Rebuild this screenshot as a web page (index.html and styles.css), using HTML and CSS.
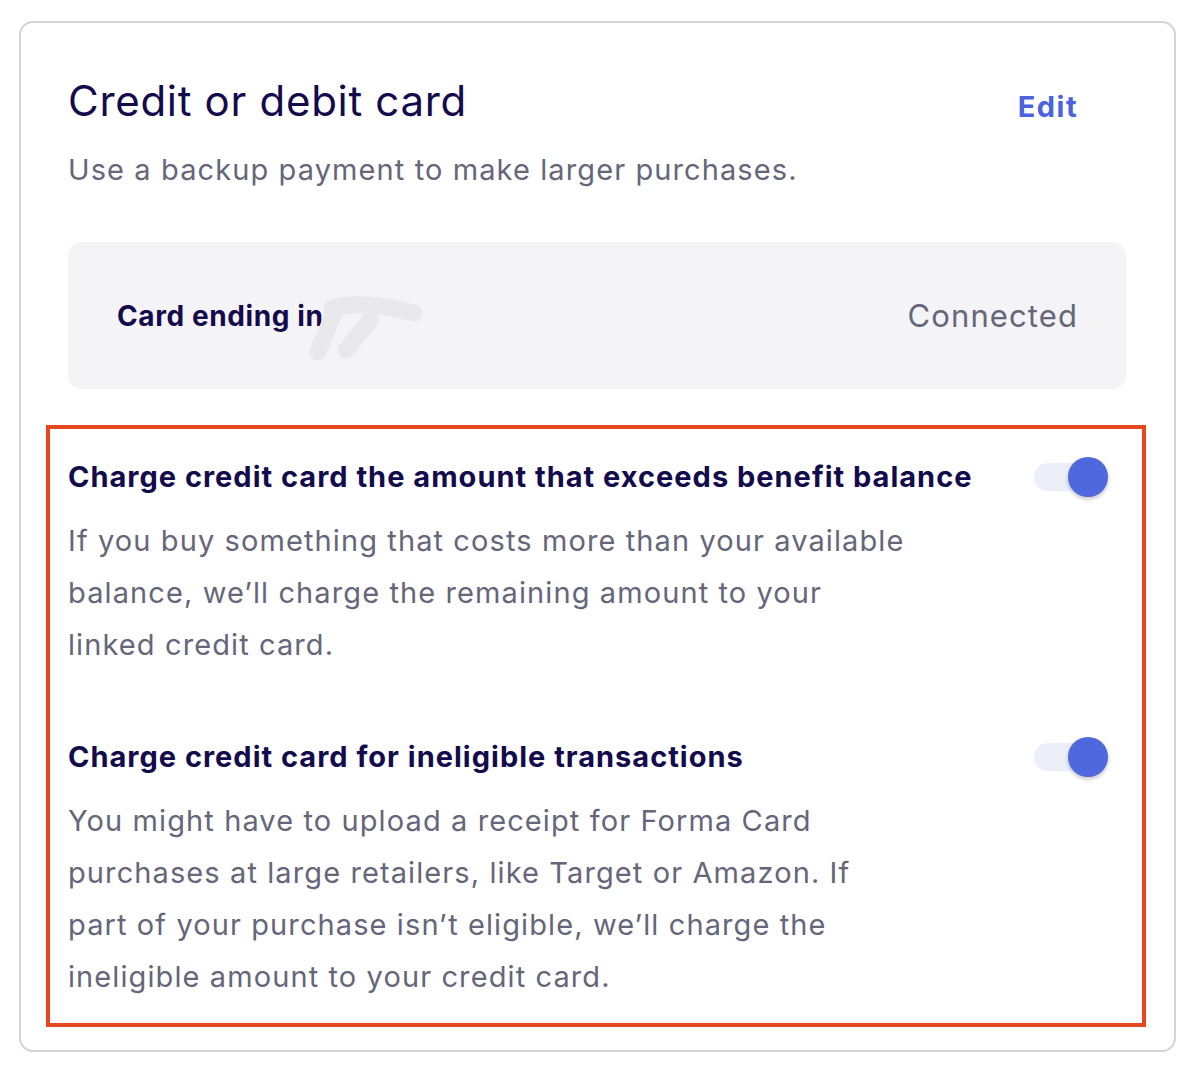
FILE: index.html
```html
<!DOCTYPE html>
<html>
	<head>
		<meta charset="UTF-8">
		<title>Credit or debit card</title>
		<link rel="stylesheet" href="styles.css">
	</head>

	<body>

		<div class="card">

			<div class="card-head">
				<h1 class="card-title">Credit or debit card</h1>
				<a class="card-edit" href="#">Edit</a>
			</div>
			<p class="card-sub">Use a backup payment to make larger purchases.</p>

			<div class="linked">
				<div class="linked-name">
					Card ending in
					<svg class="smudge" width="120" height="70" viewBox="0 0 120 70">
						<path d="M24 12 C48 6 72 9 106 17" />
						<path d="M28 12 L10 56" />
						<path d="M62 24 L38 54" />
					</svg>
				</div>
				<div class="linked-status">Connected</div>
			</div>

			<div class="options">

				<div class="option">
					<div class="option-row">
						<h2 class="option-title">Charge credit card the amount that exceeds benefit balance</h2>
						<span class="toggle"><span class="toggle-knob"></span></span>
					</div>
					<p class="option-text">If you buy something that costs more than your available balance, we’ll charge the remaining amount to your linked credit card.</p>
				</div>

				<div class="option">
					<div class="option-row">
						<h2 class="option-title">Charge credit card for ineligible transactions</h2>
						<span class="toggle"><span class="toggle-knob"></span></span>
					</div>
					<p class="option-text">You might have to upload a receipt for Forma Card purchases at large retailers, like Target or Amazon. If part of your purchase isn’t eligible, we’ll charge the ineligible amount to your credit card.</p>
				</div>

			</div>

		</div>

	</body>

</html>
```

FILE: styles.css
```css
* { margin: 0; padding: 0; box-sizing: border-box }

body {
	background: #fff;
	font-family: Inter, "Noto Sans", sans-serif;
	padding: 21px 28px 0 19px;
}

.card {
	width: 1157px;
	height: 1031px;
	border: 2px solid #d3d3d8;
	border-radius: 14px;
	padding: 54px 48px 0 47px;
}

.card-head {
	display: flex;
	justify-content: space-between;
	align-items: center;
	padding-right: 48px;
}

.card-title {
	font-size: 42px;
	font-weight: 400;
	color: #140b4c;
	letter-spacing: 0.7px;
	line-height: 48px;
}

.card-edit {
	font-size: 29px;
	font-weight: 700;
	color: #4c63dc;
	letter-spacing: 1.5px;
	text-decoration: none;
	margin-top: 10px;
}

.card-sub {
	margin-top: 25px;
	font-size: 29px;
	color: #66667a;
	letter-spacing: 1.1px;
	line-height: 40px;
}

.linked {
	margin-top: 52px;
	height: 147px;
	background: #f4f4f6;
	border-radius: 14px;
	display: flex;
	justify-content: space-between;
	align-items: center;
	padding: 0 48px 0 49px;
}

.linked-name {
	position: relative;
	font-size: 28px;
	font-weight: 700;
	color: #140b4c;
	letter-spacing: 0.6px;
}

.smudge {
	position: absolute;
	left: 191px;
	top: -3px;
	fill: none;
	stroke: #e9e9eb;
	stroke-width: 17;
	stroke-linecap: round;
	stroke-linejoin: round;
}

.linked-status {
	font-size: 31px;
	color: #66667a;
	letter-spacing: 1.1px;
}

.options {
	margin: 36px -20px 0 -22px;
	border: 4px solid #e5471f;
	padding: 26px 50px 20px 18px;
	display: flex;
	flex-direction: column;
	gap: 64px;
}

.option-row {
	display: flex;
	justify-content: space-between;
	align-items: center;
}

.option-title {
	font-size: 29px;
	font-weight: 700;
	color: #140b4c;
	letter-spacing: 1px;
	line-height: 44px;
}

.toggle {
	position: relative;
	width: 58px;
	height: 28px;
	border-radius: 14px;
	background: #eceefa;
	flex-shrink: 0;
}

.toggle-knob {
	position: absolute;
	right: -16px;
	top: -6px;
	width: 40px;
	height: 40px;
	border-radius: 50%;
	background: #5068de;
	box-shadow: 0 2px 4px rgba(0, 0, 0, 0.25);
}

.option-text {
	margin-top: 16px;
	max-width: 842px;
	font-size: 29px;
	color: #66667a;
	letter-spacing: 1.1px;
	line-height: 52px;
}
```
